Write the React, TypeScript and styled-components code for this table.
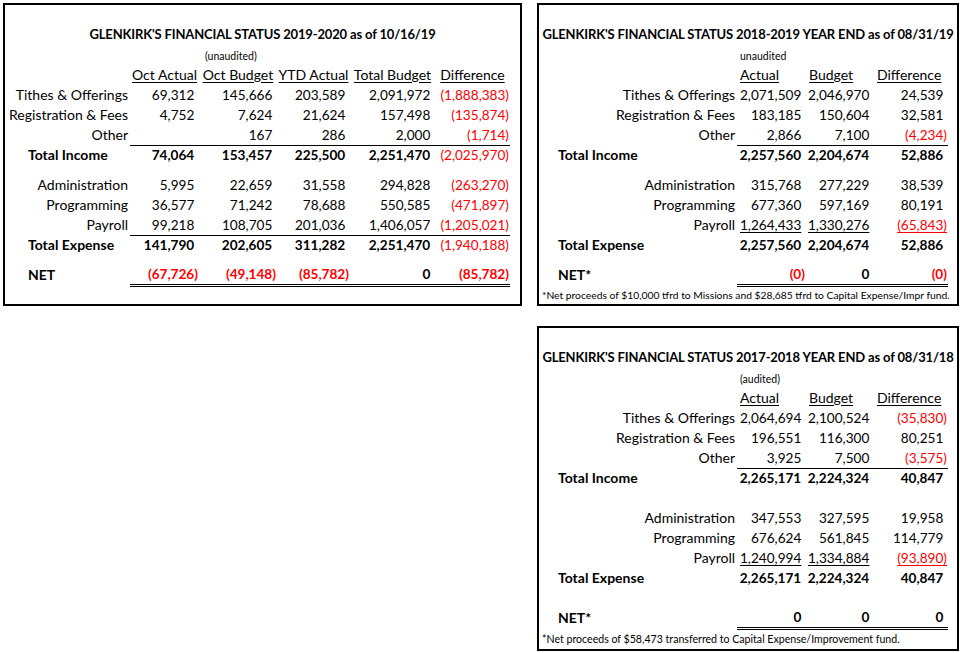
import React from 'react';
import styled, { createGlobalStyle } from 'styled-components';

const GlobalStyle = createGlobalStyle`
  html, body { margin: 0; padding: 0; background: #fff; }
  body { font-family: Lato, "Liberation Sans", sans-serif; color: #000; }
`;

const Page = styled.div`
  display: flex;
  align-items: flex-start;
  gap: 15px;
  padding: 3px 0 0 3px;
`;

const Column = styled.div`
  display: flex;
  flex-direction: column;
  gap: 20px;
`;

const Panel = styled.section<{ $w: number; $h: number }>`
  box-sizing: border-box;
  width: ${(p) => p.$w}px;
  height: ${(p) => p.$h}px;
  border: 2px solid #000;
  overflow: hidden;
`;

const Sheet = styled.table`
  border-collapse: collapse;
  table-layout: fixed;
  width: 100%;
  font-size: 14px;
  line-height: 1.2;
`;

const Col = styled.col<{ $w: number }>`
  width: ${(p) => p.$w}px;
`;

const Row = styled.tr<{ $h: number }>`
  height: ${(p) => p.$h}px;
  & > td { padding: 0; }
`;

const TitleCell = styled.td`
  text-align: center;
  font-weight: 700;
  font-size: 13px;
  letter-spacing: -0.15px;
  white-space: nowrap;
  vertical-align: middle;
`;

const NoteCell = styled.td<{ $pad: number }>`
  && { padding: 0 0 2px ${(p) => p.$pad}px; }
  font-size: 10.5px;
  vertical-align: bottom;
  white-space: nowrap;
`;

const HeadCell = styled.td<{ $align: 'center' | 'left' }>`
  && { padding: ${(p) => (p.$align === 'left' ? '0 0 0 3px' : '0')}; }
  text-align: ${(p) => p.$align};
  text-decoration: underline;
  text-underline-offset: 2px;
  white-space: nowrap;
  vertical-align: middle;
`;

const LabelCell = styled.td<{ $bold: boolean; $indent: number }>`
  && { padding: ${(p) => (p.$bold ? `0 0 0 ${p.$indent}px` : '0 2px 0 0')}; }
  text-align: ${(p) => (p.$bold ? 'left' : 'right')};
  font-weight: ${(p) => (p.$bold ? 700 : 400)};
  white-space: nowrap;
  vertical-align: middle;
`;

const NumCell = styled.td<{ $bold: boolean; $red: boolean; $rule?: 'single' | 'double' }>`
  && { padding: 0 1px 0 0; }
  text-align: right;
  white-space: nowrap;
  vertical-align: middle;
  font-size: 13.6px;
  font-weight: ${(p) => (p.$bold ? 700 : 400)};
  color: ${(p) => (p.$red ? '#ff0000' : '#000')};
  border-bottom: ${(p) =>
    p.$rule === 'single' ? '1px solid #000' : p.$rule === 'double' ? '3px double #000' : 'none'};
`;

const Underlined = styled.span`
  text-decoration: underline;
  text-underline-offset: 2px;
`;

const Ghost = styled.span`
  visibility: hidden;
`;

const FootCell = styled.td<{ $size: number }>`
  && { padding: 0 0 3px 3px; }
  font-size: ${(p) => p.$size}px;
  vertical-align: bottom;
  white-space: nowrap;
`;

interface Line {
  label: string;
  values: string[];
  total?: boolean;
  rule?: 'single' | 'double';
  underline?: boolean;
  plainLast?: boolean;
}
type Block = Line | { spacer: number };

interface SheetSpec {
  w: number;
  h: number;
  title: string;
  note: string;
  noteCol: number;
  notePad: number;
  headers: string[];
  headAlign: 'center' | 'left';
  cols: number[];
  indent: number;
  lines: Block[];
  footnote?: string;
  footSize?: number;
  footH: number;
}

const Amount: React.FC<{ v: string; u?: boolean }> = ({ v, u }) => {
  if (!v) return null;
  const neg = v.startsWith('(');
  const body = u ? <Underlined>{v}</Underlined> : <>{v}</>;
  return (
    <>
      {body}
      {!neg && <Ghost>)</Ghost>}
    </>
  );
};

const FinancialSheet: React.FC<{ spec: SheetSpec }> = ({ spec }) => {
  const n = spec.cols.length;
  const valueCount = n - 2;
  return (
    <Panel $w={spec.w} $h={spec.h}>
      <Sheet>
        <colgroup>
          {spec.cols.map((w, i) => (
            <Col key={i} $w={w} />
          ))}
        </colgroup>
        <tbody>
          <Row $h={20}>
            <td colSpan={n} />
          </Row>
          <Row $h={20}>
            <TitleCell colSpan={n}>{spec.title}</TitleCell>
          </Row>
          <Row $h={20}>
            <td colSpan={spec.noteCol} />
            <NoteCell colSpan={n - spec.noteCol} $pad={spec.notePad}>
              {spec.note}
            </NoteCell>
          </Row>
          <Row $h={20}>
            <td />
            {spec.headers.map((h) => (
              <HeadCell key={h} $align={spec.headAlign}>
                {h}
              </HeadCell>
            ))}
            <td />
          </Row>
          {spec.lines.map((b, i) => {
            if ('spacer' in b) {
              return (
                <Row key={i} $h={b.spacer}>
                  <td colSpan={n} />
                </Row>
              );
            }
            return (
              <Row key={i} $h={20}>
                <LabelCell $bold={!!b.total} $indent={spec.indent}>
                  {b.label}
                </LabelCell>
                {Array.from({ length: valueCount }).map((_, j) => {
                  const v = b.values[j] ?? '';
                  const last = j === valueCount - 1;
                  return (
                    <NumCell
                      key={j}
                      $bold={!!b.total && !(last && b.plainLast)}
                      $red={v.startsWith('(')}
                      $rule={b.rule}
                    >
                      <Amount v={v} u={b.underline} />
                    </NumCell>
                  );
                })}
                <td />
              </Row>
            );
          })}
          <Row $h={spec.footH}>
            {spec.footnote ? (
              <FootCell colSpan={n} $size={spec.footSize ?? 10.4}>
                {spec.footnote}
              </FootCell>
            ) : (
              <td colSpan={n} />
            )}
          </Row>
        </tbody>
      </Sheet>
    </Panel>
  );
};

const current: SheetSpec = {
  w: 519,
  h: 303,
  title: "GLENKIRK'S FINANCIAL STATUS 2019-2020 as of 10/16/19",
  note: '(unaudited)',
  noteCol: 2,
  notePad: 6,
  headers: ['Oct Actual', 'Oct Budget', 'YTD Actual', 'Total Budget', 'Difference'],
  headAlign: 'center',
  cols: [125, 69, 78, 73, 85, 75, 10],
  indent: 23,
  footH: 19,
  lines: [
    { label: 'Tithes & Offerings', values: ['69,312', '145,666', '203,589', '2,091,972', '(1,888,383)'] },
    { label: 'Registration & Fees', values: ['4,752', '7,624', '21,624', '157,498', '(135,874)'] },
    { label: 'Other', values: ['', '167', '286', '2,000', '(1,714)'], rule: 'single' },
    { label: 'Total Income', values: ['74,064', '153,457', '225,500', '2,251,470', '(2,025,970)'], total: true, plainLast: true },
    { spacer: 10 },
    { label: 'Administration', values: ['5,995', '22,659', '31,558', '294,828', '(263,270)'] },
    { label: 'Programming', values: ['36,577', '71,242', '78,688', '550,585', '(471,897)'] },
    { label: 'Payroll', values: ['99,218', '108,705', '201,036', '1,406,057', '(1,205,021)'], rule: 'single' },
    { label: 'Total Expense', values: ['141,790', '202,605', '311,282', '2,251,470', '(1,940,188)'], total: true, plainLast: true },
    { spacer: 10 },
    { label: 'NET', values: ['(67,726)', '(49,148)', '(85,782)', '0', '(85,782)'], total: true, rule: 'double' },
  ],
};

const lastYear: SheetSpec = {
  w: 422,
  h: 303,
  title: "GLENKIRK'S FINANCIAL STATUS 2018-2019 YEAR END as of 08/31/19",
  note: 'unaudited',
  noteCol: 1,
  notePad: 3,
  headers: ['Actual', 'Budget', 'Difference'],
  headAlign: 'left',
  cols: [198, 69, 68, 74, 9],
  indent: 19,
  footH: 19,
  footSize: 10.3,
  footnote: '*Net proceeds of $10,000 tfrd to Missions and $28,685 tfrd to Capital Expense/Impr fund.',
  lines: [
    { label: 'Tithes & Offerings', values: ['2,071,509', '2,046,970', '24,539'] },
    { label: 'Registration & Fees', values: ['183,185', '150,604', '32,581'] },
    { label: 'Other', values: ['2,866', '7,100', '(4,234)'], rule: 'single' },
    { label: 'Total Income', values: ['2,257,560', '2,204,674', '52,886'], total: true },
    { spacer: 10 },
    { label: 'Administration', values: ['315,768', '277,229', '38,539'] },
    { label: 'Programming', values: ['677,360', '597,169', '80,191'] },
    { label: 'Payroll', values: ['1,264,433', '1,330,276', '(65,843)'], underline: true },
    { label: 'Total Expense', values: ['2,257,560', '2,204,674', '52,886'], total: true },
    { spacer: 10 },
    { label: 'NET*', values: ['(0)', '0', '(0)'], total: true, rule: 'double' },
  ],
};

const priorYear: SheetSpec = {
  w: 422,
  h: 325,
  title: "GLENKIRK'S FINANCIAL STATUS 2017-2018 YEAR END as of 08/31/18",
  note: '(audited)',
  noteCol: 1,
  notePad: 3,
  headers: ['Actual', 'Budget', 'Difference'],
  headAlign: 'left',
  cols: [198, 69, 68, 74, 9],
  indent: 19,
  footH: 21,
  footSize: 10.6,
  footnote: '*Net proceeds of $58,473 transferred to Capital Expense/Improvement fund.',
  lines: [
    { label: 'Tithes & Offerings', values: ['2,064,694', '2,100,524', '(35,830)'] },
    { label: 'Registration & Fees', values: ['196,551', '116,300', '80,251'] },
    { label: 'Other', values: ['3,925', '7,500', '(3,575)'], rule: 'single' },
    { label: 'Total Income', values: ['2,265,171', '2,224,324', '40,847'], total: true },
    { spacer: 20 },
    { label: 'Administration', values: ['347,553', '327,595', '19,958'] },
    { label: 'Programming', values: ['676,624', '561,845', '114,779'] },
    { label: 'Payroll', values: ['1,240,994', '1,334,884', '(93,890)'], underline: true },
    { label: 'Total Expense', values: ['2,265,171', '2,224,324', '40,847'], total: true },
    { spacer: 20 },
    { label: 'NET*', values: ['0', '0', '0'], total: true, rule: 'double' },
  ],
};

export default function App() {
  return (
    <>
      <GlobalStyle />
      <Page>
        <FinancialSheet spec={current} />
        <Column>
          <FinancialSheet spec={lastYear} />
          <FinancialSheet spec={priorYear} />
        </Column>
      </Page>
    </>
  );
}
